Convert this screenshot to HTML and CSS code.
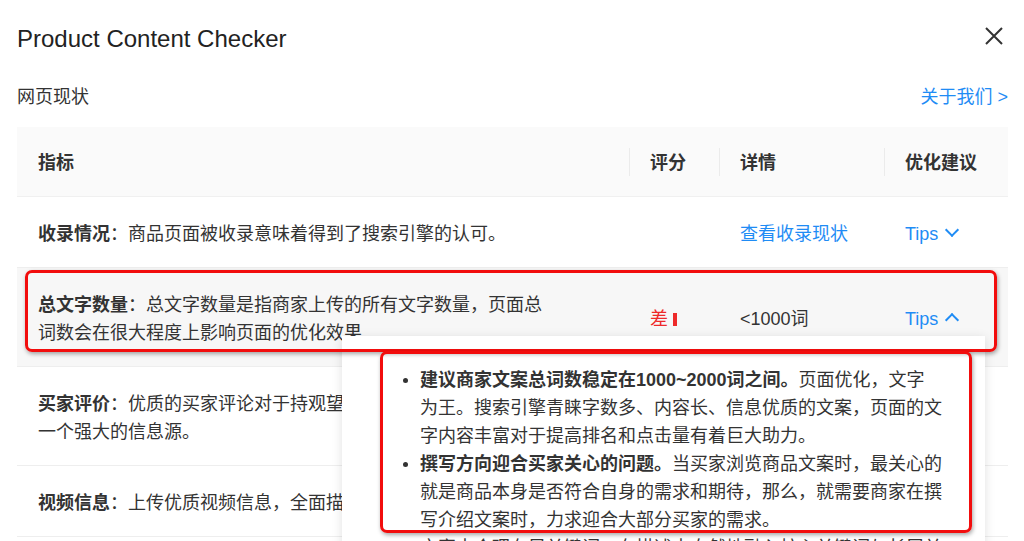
FILE: index.html
```html
<!DOCTYPE html>
<html lang="zh-CN">
<head>
    <meta charset="UTF-8">
    <meta name="viewport" content="width=device-width, initial-scale=1.0">
    <title>Product Content Checker</title>
    <link rel="stylesheet" href="styles.css">
</head>
<body>
    <div class="modal">
        <div class="modal-head">
            <h1 class="modal-title">Product Content Checker</h1>
            <button class="close-btn" aria-label="关闭">
                <svg width="18" height="18" viewBox="0 0 18 18"><path d="M1 1 L17 17 M17 1 L1 17" stroke="#333" stroke-width="2" fill="none"/></svg>
            </button>
        </div>

        <div class="section-head">
            <span class="section-title">网页现状</span>
            <a class="about-link" href="#">关于我们 &gt;</a>
        </div>

        <div class="table-wrap">
            <table class="check-table">
                <colgroup>
                    <col class="col-metric">
                    <col class="col-score">
                    <col class="col-detail">
                    <col class="col-tips">
                </colgroup>
                <thead>
                    <tr>
                        <th>指标</th>
                        <th>评分</th>
                        <th>详情</th>
                        <th>优化建议</th>
                    </tr>
                </thead>
                <tbody>
                    <tr>
                        <td><b>收录情况</b>：商品页面被收录意味着得到了搜索引擎的认可。</td>
                        <td></td>
                        <td><a class="link" href="#">查看收录现状</a></td>
                        <td><a class="tips" href="#">Tips <span class="chev down"></span></a></td>
                    </tr>
                    <tr class="row-open">
                        <td><b>总文字数量</b>：总文字数量是指商家上传的所有文字数量，页面总词数会在很大程度上影响页面的优化效果</td>
                        <td><span class="grade-bad">差</span><span class="grade-bar"></span></td>
                        <td>&lt;1000词</td>
                        <td><a class="tips" href="#">Tips <span class="chev up"></span></a></td>
                    </tr>
                    <tr>
                        <td><b>买家评价</b>：优质的买家评论对于持观望态度的消费者而言，都是一个强大的信息源。</td>
                        <td></td>
                        <td></td>
                        <td></td>
                    </tr>
                    <tr>
                        <td><b>视频信息</b>：上传优质视频信息，全面描述商品的外观与功能。</td>
                        <td></td>
                        <td></td>
                        <td></td>
                    </tr>
                </tbody>
            </table>

            <div class="tips-pop">
                <ul class="tips-list">
                    <li><b>建议商家文案总词数稳定在1000~2000词之间。</b>页面优化，文字为王。搜索引擎青睐字数多、内容长、信息优质的文案，页面的文字内容丰富对于提高排名和点击量有着巨大助力。</li>
                    <li><b>撰写方向迎合买家关心的问题。</b>当买家浏览商品文案时，最关心的就是商品本身是否符合自身的需求和期待，那么，就需要商家在撰写介绍文案时，力求迎合大部分买家的需求。</li>
                    <li>文案中合理布局关键词，在描述中自然地融入核心关键词与长尾关键词，有助于提升页面相关性。</li>
                </ul>
            </div>

            <div class="mark mark-row"></div>
            <div class="mark mark-pop"></div>
        </div>
    </div>
</body>
</html>
```

FILE: styles.css
```css
body {
    margin: 0;
    font-family: "Liberation Sans", "Noto Sans CJK SC", sans-serif;
    color: #333;
    background: #fff;
}

.modal {
    height: 100vh;
    overflow: hidden;
    padding: 0 16px 0 17px;
    box-sizing: border-box;
}

.modal-head {
    display: flex;
    justify-content: space-between;
    align-items: flex-start;
    padding-top: 23px;
}

.modal-title {
    margin: 0;
    font-size: 24px;
    line-height: 32px;
    font-weight: normal;
    color: #222;
}

.close-btn {
    border: none;
    background: none;
    padding: 0;
    margin: 4px 5px 0 0;
    width: 18px;
    height: 18px;
    cursor: pointer;
}

.close-btn svg {
    display: block;
}

.section-head {
    display: flex;
    justify-content: space-between;
    margin-top: 28px;
    font-size: 18px;
    line-height: 28px;
}

.about-link,
.link,
.tips {
    color: #1f8cf5;
    text-decoration: none;
}

.table-wrap {
    position: relative;
    margin-top: 16px;
}

.check-table {
    width: 991px;
    table-layout: fixed;
    border-collapse: collapse;
    font-size: 18px;
    line-height: 28px;
}

.col-metric { width: 612px; }
.col-score { width: 90px; }
.col-detail { width: 165px; }
.col-tips { width: 124px; }

.check-table th {
    position: relative;
    text-align: left;
    font-weight: bold;
    background: #fafafa;
    padding: 22px 21px 19px;
    border-bottom: 1px solid #f0f0f0;
}

.check-table th + th::before {
    content: "";
    position: absolute;
    left: 0;
    top: 21px;
    height: 28px;
    width: 1px;
    background: #ebebeb;
}

.check-table td {
    padding: 23px 21px 19px;
    border-bottom: 1px solid #eee;
    vertical-align: middle;
}

.check-table td:first-child {
    padding-right: 80px;
}

.row-open td {
    background: #f7f7f7;
}

.grade-bad {
    color: #ee2a2a;
}

.grade-bar {
    display: inline-block;
    width: 4px;
    height: 13px;
    margin-left: 5px;
    background: #ee2a2a;
    vertical-align: -1px;
}

.chev {
    display: inline-block;
    width: 8px;
    height: 8px;
    margin-left: 4px;
    border-right: 2px solid #1f8cf5;
    border-bottom: 2px solid #1f8cf5;
}

.chev.down {
    transform: rotate(45deg);
    vertical-align: 5px;
}

.chev.up {
    transform: rotate(-135deg);
    vertical-align: 0;
}

.tips-pop {
    position: absolute;
    left: 325px;
    top: 209px;
    width: 643px;
    box-sizing: border-box;
    padding: 30px 43px 20px 78px;
    background: #fff;
    box-shadow: 0 2px 10px rgba(0, 0, 0, 0.12);
    font-size: 18px;
    line-height: 28px;
}

.tips-list {
    margin: 0;
    padding: 0;
    list-style: none;
}

.tips-list li {
    position: relative;
}

.tips-list li::before {
    content: "";
    position: absolute;
    left: -17px;
    top: 12px;
    width: 5px;
    height: 5px;
    border-radius: 50%;
    background: #333;
}

.mark {
    position: absolute;
    border: 3px solid #f20d0d;
    border-radius: 7px;
    box-shadow: 1px 2px 4px rgba(0, 0, 0, 0.35);
    box-sizing: border-box;
}

.mark-row {
    left: 8px;
    top: 143px;
    width: 972px;
    height: 82px;
}

.mark-pop {
    left: 363px;
    top: 224px;
    width: 592px;
    height: 182px;
}
```
